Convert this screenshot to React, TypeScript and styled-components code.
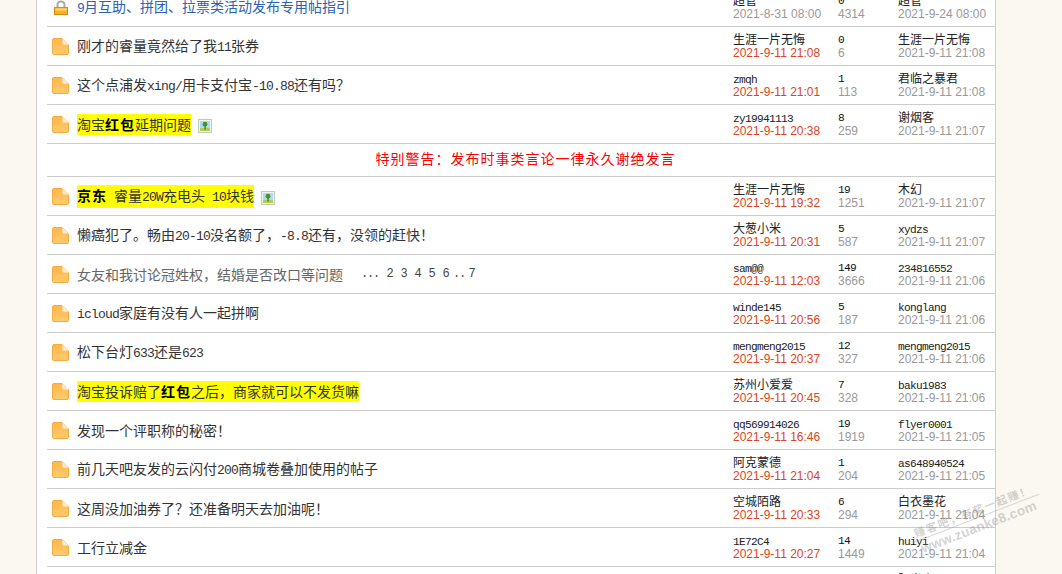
import React from "react";
import styled, { createGlobalStyle } from "styled-components";

const Global = createGlobalStyle`
  html, body { margin: 0; padding: 0; background: #fbf8f1; height: 574px; overflow: hidden; }
  #root { height: 574px; overflow: hidden; position: relative; }
`;

const Page = styled.div`
  width: 1062px;
  height: 574px;
  overflow: hidden;
  position: relative;
  font-family: "Noto Sans CJK SC", "Liberation Sans", sans-serif;
`;

const Panel = styled.main`
  box-sizing: border-box;
  width: 960px;
  margin: -12px 0 0 36px;
  padding-left: 10px;
  background: #fff;
  border-left: 1px solid #ccc;
  border-right: 1px solid #ccc;
`;

const Row = styled.section`
  display: grid;
  grid-template-columns: 30px 656px 105px 60px 97px;
  height: 38px;
  align-items: center;
  border-bottom: 1px solid #ccc;
`;

const Notice = styled.section`
  display: flex;
  align-items: center;
  justify-content: center;
  box-sizing: border-box;
  height: 33px;
  padding: 0 0 5px 9px;
  border-bottom: 1px solid #ccc;
  color: #f00;
  font-size: 14px;
  letter-spacing: 1px;
`;

const IconCell = styled.div`
  display: flex;
  padding-left: 5px;
  align-items: center;
`;

const Title = styled.div<{ $tone?: string }>`
  display: flex;
  align-items: center;
  font-size: 14px;
  line-height: 21px;
  white-space: nowrap;
  color: ${(p) => p.$tone || "#333"};
`;

const Latin = styled.span`
  font-family: "Liberation Mono", monospace;
  font-size: 0.93em;
  letter-spacing: -0.0624em;
`;

const Marked = styled.span<{ $on?: boolean }>`
  background: ${(p) => (p.$on ? "#ff0" : "transparent")};
`;

const Strong = styled.strong`
  font-weight: 700;
  letter-spacing: 1px;
  color: #000;
`;

const Attachment = styled.svg`
  margin: 4px 0 0 7px;
  flex: none;
`;

const Pages = styled.span`
  display: inline-flex;
  margin-left: 18px;
  font-family: "Liberation Mono", monospace;
  font-size: 12px;
  color: #444;
`;

const PageNum = styled.span`
  width: 14px;
  text-align: center;
`;

const Dots = styled.span<{ $w: number }>`
  width: ${(p) => p.$w}px;
  letter-spacing: -1.2px;
`;

const Stack = styled.div`
  display: flex;
  flex-direction: column;
  white-space: nowrap;
`;

const Name = styled.div`
  font-size: 12px;
  line-height: 14px;
  height: 14px;
  color: #222;
`;

const Count = styled.div`
  font-family: "Liberation Mono", monospace;
  font-size: 11.16px;
  letter-spacing: -0.7px;
  line-height: 16px;
  height: 14px;
  color: #111;
`;

const Stamp = styled.div<{ $fresh?: boolean }>`
  font-family: "Liberation Sans", sans-serif;
  font-size: 12px;
  line-height: 14px;
  height: 14px;
  color: ${(p) => (p.$fresh ? "#dc4420" : "#999")};
`;

const Watermark = styled.aside`
  position: absolute;
  left: 908px;
  top: 503px;
  width: 136px;
  transform: rotate(-21deg);
  color: rgba(130, 130, 130, 0.36);
  font-family: "Liberation Sans", sans-serif;
  text-align: center;
  pointer-events: none;
`;

const MarkTop = styled.div`
  font-family: "Noto Sans CJK SC", sans-serif;
  font-size: 11px;
  font-weight: 700;
  line-height: 14px;
  letter-spacing: 1.5px;
`;

const MarkLine = styled.div`
  height: 1px;
  background: rgba(130, 130, 130, 0.3);
  margin: 1px 0;
`;

const MarkSite = styled.div`
  font-size: 13.5px;
  font-weight: 700;
  line-height: 16px;
  letter-spacing: 0.2px;
`;

const Mix = ({ text }: { text: string }) => (
  <>
    {text.split(/([\x20-\x7e]+)/).map((s, i) =>
      /^[\x20-\x7e]+$/.test(s) ? (
        <Latin key={i}>{s.replace(/ /g, "\u00a0")}</Latin>
      ) : (
        s
      )
    )}
  </>
);

const FileIcon = () => (
  <svg width="17" height="17" viewBox="0 0 17 17">
    <defs>
      <linearGradient id="fileFill" x1="0" y1="0" x2="0" y2="1">
        <stop offset="0" stopColor="#ffb648" />
        <stop offset="1" stopColor="#ffcb70" />
      </linearGradient>
    </defs>
    <path
      d="M1.5 0.5H10.5L16.5 6.5V15a1.5 1.5 0 0 1-1.5 1.5H2A1.5 1.5 0 0 1 .5 15V2A1.5 1.5 0 0 1 1.5 .5Z"
      fill="url(#fileFill)"
      stroke="#f7ab3e"
    />
    <path d="M10.5 .5V5a1.5 1.5 0 0 0 1.5 1.5H16.5Z" fill="#fdeacb" stroke="#fbe0b4" strokeWidth=".6" />
  </svg>
);

const LockIcon = () => (
  <svg width="14" height="15" viewBox="0 0 14 15" style={{ marginLeft: 2, marginTop: 1 }}>
    <path d="M3.5 7V4.5a3.5 3 0 0 1 7 0V7" fill="none" stroke="#a9a9a9" strokeWidth="2" />
    <rect x=".5" y="7.5" width="13" height="7" fill="#f7b122" stroke="#d98a10" />
    <rect x="1.5" y="8.5" width="11" height="2" fill="#ffdc70" />
  </svg>
);

const ImageIcon = () => (
  <Attachment width="14" height="14" viewBox="0 0 14 14">
    <rect x=".6" y=".6" width="12.8" height="12.8" fill="#fff" stroke="#c8c8b8" strokeWidth="1.2" />
    <rect x="2" y="2" width="10" height="7" fill="#a6dcf5" />
    <rect x="2" y="9" width="10" height="3" fill="#a8d24e" />
    <rect x="6.4" y="7" width="1.4" height="3.5" fill="#8a5a20" />
    <circle cx="7" cy="5.2" r="2.4" fill="#3f962a" />
  </Attachment>
);

type Item = {
  title: [string, boolean?][];
  tone?: string;
  hl?: boolean;
  img?: boolean;
  pages?: boolean;
  lock?: boolean;
  author: string;
  posted: string;
  fresh?: boolean;
  replies: string;
  views: string;
  last: string;
  lastAt: string;
};

const d = (t: string) => `2021-9-11 ${t}`;

const top: Item[] = [
  { title: [["9月互助、拼团、拉票类活动发布专用帖指引"]], tone: "#2b62b5", lock: true, author: "超管", posted: "2021-8-31 08:00", replies: "0", views: "4314", last: "超管", lastAt: "2021-9-24 08:00" },
  { title: [["刚才的睿量竟然给了我11张券"]], author: "生涯一片无悔", posted: d("21:08"), fresh: true, replies: "0", views: "6", last: "生涯一片无悔", lastAt: d("21:08") },
  { title: [["这个点浦发xing/用卡支付宝-10.88还有吗？"]], author: "zmqh", posted: d("21:01"), fresh: true, replies: "1", views: "113", last: "君临之暴君", lastAt: d("21:08") },
  { title: [["淘宝"], ["红包", true], ["延期问题"]], hl: true, img: true, author: "zy19941113", posted: d("20:38"), fresh: true, replies: "8", views: "259", last: "谢烟客", lastAt: d("21:07") },
];

const rest: Item[] = [
  { title: [["京东", true], [" 睿量20W充电头 10块钱"]], hl: true, img: true, author: "生涯一片无悔", posted: d("19:32"), fresh: true, replies: "19", views: "1251", last: "木幻", lastAt: d("21:07") },
  { title: [["懒癌犯了。畅由20-10没名额了，-8.8还有，没领的赶快！"]], author: "大葱小米", posted: d("20:31"), fresh: true, replies: "5", views: "587", last: "xydzs", lastAt: d("21:07") },
  { title: [["女友和我讨论冠姓权，结婚是否改口等问题"]], tone: "#666", pages: true, author: "sam@@", posted: d("12:03"), fresh: true, replies: "149", views: "3666", last: "234816552", lastAt: d("21:06") },
  { title: [["icloud家庭有没有人一起拼啊"]], author: "winde145", posted: d("20:56"), fresh: true, replies: "5", views: "187", last: "konglang", lastAt: d("21:06") },
  { title: [["松下台灯633还是623"]], author: "mengmeng2015", posted: d("20:37"), fresh: true, replies: "12", views: "327", last: "mengmeng2015", lastAt: d("21:06") },
  { title: [["淘宝投诉赔了"], ["红包", true], ["之后，商家就可以不发货嘛"]], hl: true, author: "苏州小爱爱", posted: d("20:45"), fresh: true, replies: "7", views: "328", last: "baku1983", lastAt: d("21:06") },
  { title: [["发现一个评职称的秘密！"]], author: "qq569914026", posted: d("16:46"), fresh: true, replies: "19", views: "1919", last: "flyer0001", lastAt: d("21:05") },
  { title: [["前几天吧友发的云闪付200商城卷叠加使用的帖子"]], author: "阿克蒙德", posted: d("21:04"), fresh: true, replies: "1", views: "204", last: "as648940524", lastAt: d("21:05") },
  { title: [["这周没加油券了？还准备明天去加油呢！"]], author: "空城陌路", posted: d("20:33"), fresh: true, replies: "6", views: "294", last: "白衣墨花", lastAt: d("21:04") },
  { title: [["工行立减金"]], author: "1E72C4", posted: d("20:27"), fresh: true, replies: "14", views: "1449", last: "huiyi", lastAt: d("21:04") },
  { title: [["双十一活动"]], author: "hkdkdk", posted: d("20:20"), fresh: true, replies: "3", views: "120", last: "阳光小子", lastAt: d("21:04") },
];

const Thread = ({ item }: { item: Item }) => (
  <Row>
    <IconCell>{item.lock ? <LockIcon /> : <FileIcon />}</IconCell>
    <Title $tone={item.tone}>
      <Marked $on={item.hl}>
        {item.title.map(([text, bold], i) =>
          bold ? (
            <Strong key={i}>
              <Mix text={text} />
            </Strong>
          ) : (
            <Mix key={i} text={text} />
          )
        )}
      </Marked>
      {item.img && <ImageIcon />}
      {item.pages && (
        <Pages>
          <Dots $w={22}>...</Dots>
          {["2", "3", "4", "5", "6"].map((n) => (
            <PageNum key={n}>{n}</PageNum>
          ))}
          <Dots $w={12}>..</Dots>
          <PageNum>7</PageNum>
        </Pages>
      )}
    </Title>
    <Stack>
      <Name>
        <Mix text={item.author} />
      </Name>
      <Stamp $fresh={item.fresh}>{item.posted}</Stamp>
    </Stack>
    <Stack>
      <Count>{item.replies}</Count>
      <Stamp>{item.views}</Stamp>
    </Stack>
    <Stack>
      <Name>
        <Mix text={item.last} />
      </Name>
      <Stamp>{item.lastAt}</Stamp>
    </Stack>
  </Row>
);

export default function App() {
  return (
    <Page>
      <Global />
      <Panel>
        {top.map((item, i) => (
          <Thread key={i} item={item} />
        ))}
        <Notice>特别警告：发布时事类言论一律永久谢绝发言</Notice>
        {rest.map((item, i) => (
          <Thread key={i} item={item} />
        ))}
      </Panel>
      <Watermark>
        <MarkTop>赚客吧，有奖一起赚！</MarkTop>
        <MarkLine />
        <MarkSite>www.zuanke8.com</MarkSite>
      </Watermark>
    </Page>
  );
}
